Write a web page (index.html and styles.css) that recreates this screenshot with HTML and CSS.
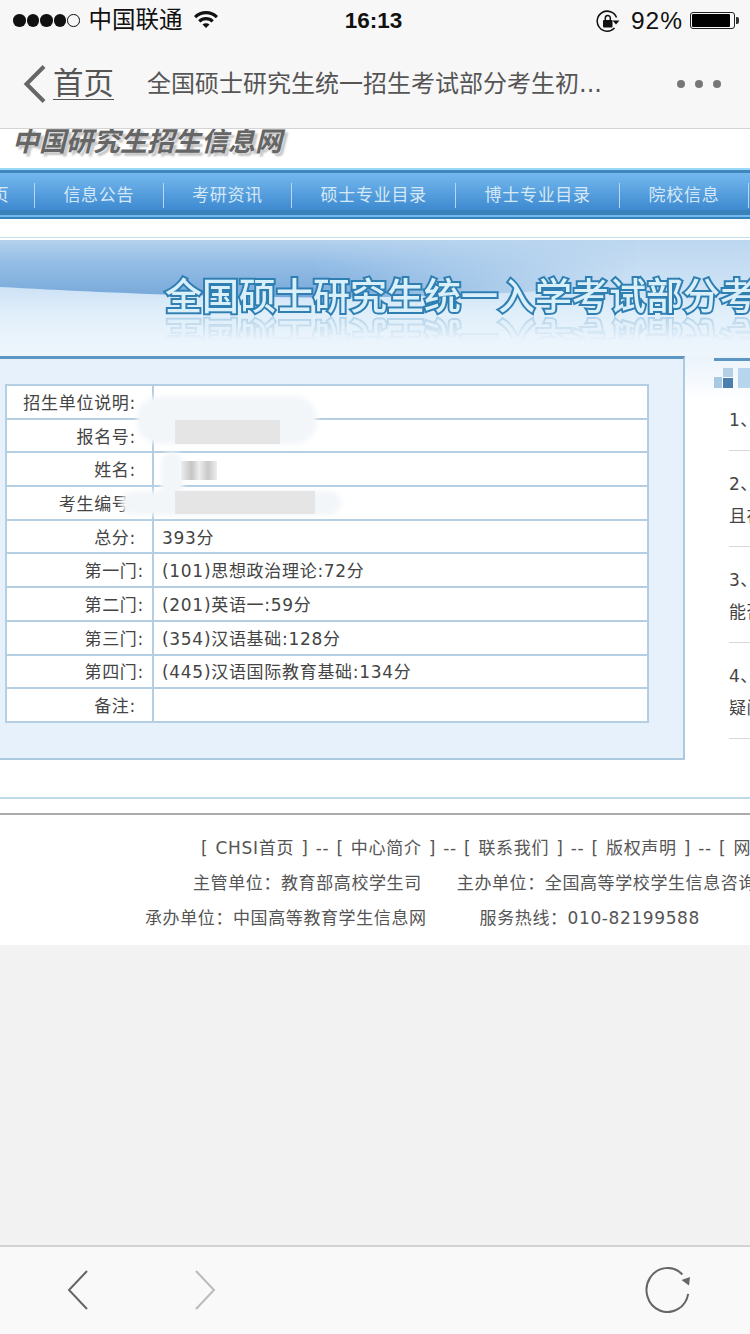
FILE: index.html
```html
<!DOCTYPE html>
<html lang="zh">
<head>
<meta charset="utf-8">
<title>全国硕士研究生统一招生考试部分考生初试成绩</title>
<link rel="stylesheet" href="styles.css">
</head>
<body>
<div class="screen">
  <header class="chrome">
    <div class="status">
      <div class="status-left">
        <span class="signal"><i></i><i></i><i></i><i></i><i class="off"></i></span>
        <span class="carrier">中国联通</span>
        <svg class="wifi" viewBox="0 0 24 18" width="24" height="18"><path d="M0 6a17 17 0 0 1 24 0l-2.200 2.300a13.800 13.800 0 0 0-19.600 0z"/><path d="M4.200 10.300a11 11 0 0 1 15.600 0l-2.200 2.300a7.900 7.900 0 0 0-11.200 0z"/><path d="M8.500 14.600a5 5 0 0 1 7 0L12 18z"/></svg>
      </div>
      <div class="clock">16:13</div>
      <div class="status-right">
        <svg class="lock" viewBox="0 0 24 24" width="24" height="24"><path d="M18.500 19A10 10 0 1 1 20.500 8.500" fill="none" stroke="#111" stroke-width="1.500"/><path d="M16.500 11.500h7l-3.500 4z" fill="#111"/><rect x="7" y="11" width="9.500" height="7.500" rx="1" fill="#111"/><path d="M9.300 11.500V9a2.500 2.500 0 0 1 5 0v2.500" fill="none" stroke="#111" stroke-width="1.500"/></svg>
        <span class="percent">92%</span>
        <span class="battery"><b></b></span>
      </div>
    </div>
    <nav class="navline">
      <svg class="back" viewBox="0 0 24 38" width="24" height="38"><path d="M21 1.500 3.500 19 21 36.500" fill="none" stroke="#666" stroke-width="4"/></svg>
      <a class="home">首页</a>
      <span class="title">全国硕士研究生统一招生考试部分考生初...</span>
      <span class="more"><i></i><i></i><i></i></span>
    </nav>
  </header>

  <main class="page">
    <div class="logo"><span>中国研究生招生信息网</span></div>
    <ul class="menu">
      <li class="cut"><span>首页</span></li>
      <li>信息公告</li>
      <li>考研资讯</li>
      <li>硕士专业目录</li>
      <li>博士专业目录</li>
      <li>院校信息</li>
    </ul>
    <div class="gap"></div>
    <section class="banner">
      <svg class="swoosh" viewBox="0 0 750 116" width="750" height="116">
        <defs>
          <linearGradient id="sw" x1="0" y1="0" x2="0" y2="1">
            <stop offset="0" stop-color="#b4d1ed"/>
            <stop offset=".4" stop-color="#94bde6"/>
            <stop offset="1" stop-color="#77a8d9"/>
          </linearGradient>
          <linearGradient id="fade" x1="0" y1="0" x2="1" y2="0">
            <stop offset="0" stop-color="#fff"/>
            <stop offset=".42" stop-color="#fff"/>
            <stop offset=".85" stop-color="#000"/>
          </linearGradient>
          <mask id="fademask"><rect width="750" height="116" fill="url(#fade)"/></mask>
        </defs>
        <path d="M0 0H750V30C620 50 420 62 220 56 130 54 60 50 0 47Z" fill="url(#sw)" mask="url(#fademask)"/>
      </svg>
      <h1 class="headline">全国硕士研究生统一入学考试部分考生初试成绩</h1>
    </section>
    <div class="columns">
      <section class="panel">
        <div class="table-wrap">
          <table class="scores">
            <tr><th>招生单位说明:</th><td></td></tr>
            <tr><th>报名号:</th><td></td></tr>
            <tr><th>姓名:</th><td></td></tr>
            <tr><th>考生编号:</th><td></td></tr>
            <tr><th>总分:</th><td>393分</td></tr>
            <tr><th class="tight">第一门:</th><td>(101)思想政治理论:72分</td></tr>
            <tr><th class="tight">第二门:</th><td>(201)英语一:59分</td></tr>
            <tr><th class="tight">第三门:</th><td>(354)汉语基础:128分</td></tr>
            <tr><th class="tight">第四门:</th><td>(445)汉语国际教育基础:134分</td></tr>
            <tr><th>备注:</th><td></td></tr>
          </table>
          <div class="smear smear-a"></div>
          <div class="smear smear-b"></div>
          <div class="smear smear-c"></div>
          <div class="mosaic mosaic-a"></div>
          <div class="mosaic mosaic-b"></div>
          <div class="mosaic mosaic-c"></div>
        </div>
      </section>
      <aside class="notes">
        <div class="notes-head">
          <svg class="notes-icon" viewBox="0 0 20 20" width="20" height="20"><rect x="0" y="9" width="8" height="11" fill="#a9c9e3"/><rect x="9" y="0" width="10" height="9" fill="#b4cfe6"/><rect x="9" y="10" width="10" height="10" fill="#4a7fae"/></svg>
          <span class="notes-tab"></span>
        </div>
        <ol class="notes-list">
          <li><p>1、考生</p></li>
          <li><p>2、考生</p><p>且在</p></li>
          <li><p>3、考生</p><p>能否</p></li>
          <li><p>4、考生</p><p>疑问</p></li>
        </ol>
      </aside>
    </div>
    <div class="rule-blue"></div>
    <footer class="foot">
      <p class="l1">[ CHSI首页 ] -- [ 中心简介 ] -- [ 联系我们 ] -- [ 版权声明 ] -- [ 网站地图 ]</p>
      <p class="l2"><span class="a">主管单位：教育部高校学生司</span><span class="b">主办单位：全国高等学校学生信息咨询与就业指导中心</span></p>
      <p class="l3"><span class="a">承办单位：中国高等教育学生信息网</span><span class="b">服务热线：010-82199588</span></p>
    </footer>
  </main>

  <div class="filler"></div>

  <div class="toolbar">
    <svg class="tool tool-back" viewBox="0 0 24 42" width="24" height="42"><path d="M21 2 3 21 21 40" fill="none" stroke="#666" stroke-width="2"/></svg>
    <svg class="tool tool-forward" viewBox="0 0 24 42" width="24" height="42"><path d="M3 2 21 21 3 40" fill="none" stroke="#bbb" stroke-width="2"/></svg>
    <svg class="tool tool-reload" viewBox="0 0 46 46" width="46" height="46"><path d="M37.400 7.500A21 22 0 1 0 43.200 26.800" fill="none" stroke="#666" stroke-width="2"/><path d="M36.500 13 45 10 44 18.500Z" fill="#666"/></svg>
  </div>
</div>
</body>
</html>
```
FILE: styles.css
```css
* { box-sizing: border-box; }
html, body { margin: 0; padding: 0; }
body { width: 750px; height: 1334px; overflow: hidden; background: #f2f2f2; }
p, ul, ol, h1 { margin: 0; padding: 0; }
ul, ol { list-style: none; }

.screen {
  width: 750px; height: 1334px; display: flex; flex-direction: column; overflow: hidden;
  font-family: "DejaVu Sans", "Noto Sans CJK SC", sans-serif;
}

/* browser chrome */
.chrome { height: 129px; flex: none; background: #f7f7f7; border-bottom: 1px solid #d4d4d4; }
.status { height: 40px; position: relative; display: flex; justify-content: space-between; align-items: center; padding: 1px 11px 0 13px; color: #111; font-family: "Liberation Sans", "Noto Sans CJK SC", sans-serif; }
.status-left, .status-right { display: flex; align-items: center; }
.signal { display: flex; gap: 1px; }
.signal i { width: 12.500px; height: 12.500px; border-radius: 50%; background: #111; }
.signal i.off { background: none; border: 1px solid #111; }
.carrier { font-size: 23.500px; margin-left: 9px; line-height: 1; }
.wifi { margin-left: 11px; margin-top: -4px; fill: #111; }
.clock { position: absolute; left: 0; right: 0; top: 0; padding-right: 3px; text-align: center; line-height: 41px; font-size: 22.500px; font-weight: 700; }
.lock { margin-right: 11px; }
.percent { font-size: 24.500px; letter-spacing: 1px; margin-right: 7px; }
.battery { width: 45px; height: 17px; border: 1px solid #222; border-radius: 3px; padding: 1px; position: relative; display: block; margin-right: 4px; }
.battery b { display: block; width: 38px; height: 100%; background: #000; border-radius: 1px; }
.battery::after { content: ""; position: absolute; right: -5px; top: 4px; width: 3px; height: 7px; background: #333; border-radius: 0 2px 2px 0; }

.navline { height: 88px; display: flex; align-items: center; color: #555; padding: 0 0 0 23px; }
.back { flex: none; }
.home { font-size: 30.500px; margin-left: 6px; text-decoration: underline; text-decoration-thickness: 1px; text-underline-offset: 5px; line-height: 1; }
.title { font-size: 24px; margin-left: 33px; line-height: 1; white-space: nowrap; width: 460px; }
.more { display: flex; gap: 10px; margin-left: 70px; }
.more i { width: 8px; height: 8px; border-radius: 50%; background: #777; }

/* page */
.page { height: 816px; flex: none; background: #fff; overflow: hidden; }
.logo { height: 39px; padding-left: 12px; overflow: hidden; }
.logo span { display: block; font-size: 27px; line-height: 27px; margin-top: -1px; font-weight: 700; font-style: italic; color: #666; letter-spacing: 0; text-shadow: 3px 3px 2px #c4c4c4; white-space: nowrap; }

.menu { height: 51px; padding-top: 3px; display: flex; align-items: center; white-space: nowrap; color: #d5e8f7; font-size: 17px; letter-spacing: .700px;
  background: linear-gradient(#9bd8f7 0, #9bd8f7 2px, #3f88bd 2px, #3f88bd 5px, #74b8ee 5px, #3e8ad0 42px, #3a80bb 42px, #3a80bb 47px, #74b9ec 47px, #74b9ec 49px, #3484bd 49px); }
.menu li { height: 25px; line-height: 25px; padding: 0 28.400px; border-right: 1px solid #b6d7f0; flex: none; }
.menu li.cut { width: 35px; padding: 0; overflow: hidden; display: flex; justify-content: flex-end; }
.menu li.cut span { flex: none; padding-right: 30px; margin-left: -60px; width: 60px; }

.gap { height: 19px; background: #fff; border-bottom: 1px solid #c5dde8; }
.banner { height: 118px; position: relative; overflow: hidden; border-top: 2px solid #fff; background: linear-gradient(#bcd7f0 0, #cde2f5 40%, #dfeefa 62%, #eaf4fc 85%, #eef6fc 100%); }
.swoosh { position: absolute; left: 0; top: 0; }
.headline { position: absolute; left: 165px; top: 36px; white-space: nowrap; font-size: 37px; line-height: 44px; letter-spacing: 0; font-weight: 500; color: #d9eff9; -webkit-text-stroke: 4px #2f7fb3; paint-order: stroke fill; -webkit-box-reflect: below -8px linear-gradient(transparent 35%, rgba(255,255,255,.3)); }

.columns { display: flex; height: 404px; background: #eff6fc; width: 900px; }
.panel { width: 685px; flex: none; background: #e6f1fb; border-top: 3px solid #5c97c3; border-right: 2px solid #abc9df; border-bottom: 2px solid #abc9df; padding: 25px 0 0 5px; }
.table-wrap { position: relative; width: 644px; }
.scores { width: 644px; height: 339px; border-collapse: collapse; table-layout: fixed; background: #fff; color: #444; font-size: 17px; letter-spacing: .700px; line-height: 1; }
.scores th, .scores td { border: 2px solid #b4cfe4; padding: 3px 0 0; font-weight: 400; white-space: nowrap; }
.scores th { width: 147px; text-align: right; padding-right: 16px; }
.scores th.tight { padding-right: 8px; }
.scores td { padding-left: 8px; }

.smear { position: absolute; background: #f3f6f9; filter: blur(2.500px); border-radius: 22px; }
.smear-a { left: 132px; top: 12px; width: 180px; height: 48px; }
.smear-b { left: 156px; top: 68px; width: 22px; height: 62px; }
.smear-c { left: 116px; top: 107px; width: 220px; height: 24px; }
.mosaic { position: absolute; background: #e5e5e5; filter: blur(.500px); }
.mosaic-a { left: 170px; top: 36px; width: 105px; height: 24px; }
.mosaic-b { left: 176px; top: 77px; width: 36px; height: 19px; background: linear-gradient(90deg, #eee, #c5c5c5 30%, #eee 50%, #c9c9c9 75%, #eee); }
.mosaic-c { left: 170px; top: 107px; width: 140px; height: 23px; }

.notes { flex: 1; padding: 2px 0 0 29px; background: linear-gradient(#eaf3fb 0, #fff 45px); }
.notes-head { border-top: 3px solid #5c97c3; padding-top: 7px; display: flex; gap: 4px; height: 34px; }
.notes-tab { width: 100px; height: 20px; background: #b7d6ee; }
.notes-list { padding-left: 15px; color: #444; font-size: 17px; line-height: 32px; letter-spacing: .500px; margin-top: 7px; white-space: nowrap; }
.notes-list li { padding: 5px 0 14px; border-bottom: 1px solid #d9d9d9; margin-bottom: 12px; }

.rule-blue { height: 39px; background: #fff; border-bottom: 2px solid #bfd9e8; }
.foot { height: 146px; border-top: 2px solid #ababab; margin-top: 14px; padding-top: 16px; color: #555; font-size: 17px; letter-spacing: .600px; white-space: nowrap; line-height: 35px; }
.l1 { padding-left: 201px; letter-spacing: .700px; word-spacing: 1px; }
.l2 { padding-left: 193px; }
.l3 { padding-left: 145px; }
.b { margin-left: 35px; }
.l3 .b { margin-left: 53px; }

.filler { flex: 1; background: #f2f2f2; }

.toolbar { height: 89px; flex: none; background: #f9f9f9; border-top: 2px solid #d3d3d3; display: flex; align-items: center; padding: 0 0 2px 66px; }
.tool { flex: none; }
.tool-forward { margin-left: 103px; }
.tool-reload { margin-left: 428px; }
```
